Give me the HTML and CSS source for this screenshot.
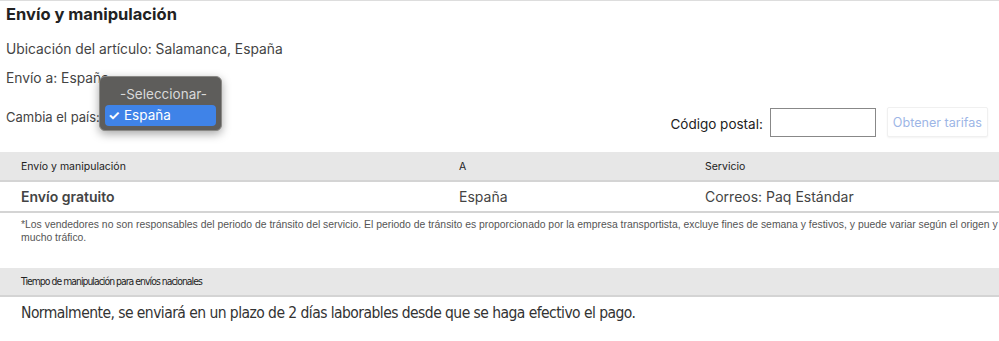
FILE: index.html
```html
<!DOCTYPE html>
<html lang="es">
<head>
    <meta charset="UTF-8">
    <meta name="viewport" content="width=device-width, initial-scale=1.0">
    <title>Envío y manipulación</title>
    <link rel="stylesheet" href="styles.css">
</head>
<body>
    <section class="shipping">
        <h2 class="shipping-title">Envío y manipulación</h2>

        <p class="info-line">Ubicación del artículo: Salamanca, España</p>
        <p class="info-line ship-to">Envío a: España</p>

        <div class="rates-row">
            <div class="country">
                <label for="country">Cambia el país:</label>
                <span class="country-select" id="country"></span>
                <div class="dropdown">
                    <div class="dropdown-item">-Seleccionar-</div>
                    <div class="dropdown-item selected"><span class="check">&#10003;</span>España</div>
                </div>
            </div>
            <div class="zip">
                <label for="zip">Código postal:</label>
                <input type="text" id="zip" name="zip">
                <button type="button" class="rates-btn" disabled>Obtener tarifas</button>
            </div>
        </div>

        <div class="ship-table">
            <div class="table-head">
                <div>Envío y manipulación</div>
                <div>A</div>
                <div>Servicio</div>
            </div>
            <div class="table-row">
                <div class="cost">Envío gratuito</div>
                <div>España</div>
                <div>Correos: Paq Estándar</div>
            </div>
        </div>

        <p class="note">*Los vendedores no son responsables del periodo de tránsito del servicio. El periodo de tránsito es proporcionado por la empresa transportista, excluye fines de semana y festivos, y puede variar según el origen y el destino, especialmente durante periodos de mucho tráfico.</p>

        <div class="handling">
            <div class="handling-head">Tiempo de manipulación para envíos nacionales</div>
            <div class="handling-body">Normalmente, se enviará en un plazo de 2 días laborables desde que se haga efectivo el pago.</div>
        </div>
    </section>
</body>
</html>
```

FILE: styles.css
```css
html {
    overflow: hidden;
}

body {
    margin: 0;
    padding: 0;
    font-family: 'Inter', 'Open Sans', sans-serif;
    color: #333;
    background: #fff;
}

.shipping {
    width: 1240px;
    border-top: 1px solid #ddd;
}

.shipping-title {
    margin: 0;
    padding: 2px 6px 0;
    font-size: 16.5px;
    font-weight: 700;
    color: #222;
    line-height: 22px;
}

.info-line {
    margin: 0;
    padding: 14px 6px 0;
    font-size: 13.8px;
    line-height: 20px;
    color: #444;
}

.info-line.ship-to {
    padding-top: 9px;
}

.rates-row {
    display: flex;
    align-items: flex-start;
    width: 982px;
    padding: 0 0 0 6px;
    margin-top: 19px;
}

.country {
    position: relative;
    display: flex;
    align-items: center;
    height: 20px;
    font-size: 13px;
    color: #444;
}

.country-select {
    display: inline-block;
    width: 100px;
    height: 20px;
}

.dropdown {
    position: absolute;
    left: 93px;
    top: -31px;
    width: 111px;
    padding: 7px 5px 4px;
    background: #5e5d5b;
    border: 1px solid #8a8986;
    border-radius: 6px;
    box-shadow: 0 3px 10px rgba(0, 0, 0, 0.35);
    font-size: 13.5px;
}

.dropdown-item {
    height: 21px;
    line-height: 21px;
    color: #d9d9d9;
    text-align: center;
    padding-left: 6px;
}

.dropdown-item.selected {
    background: #3f83e8;
    color: #fff;
    text-align: left;
    border-radius: 4px;
    padding-left: 3px;
}

.check {
    display: inline-block;
    width: 16px;
    font-weight: 700;
}

.zip {
    display: flex;
    align-items: center;
    margin-left: auto;
    font-size: 13.5px;
    color: #222;
}

.zip label {
    margin-right: 7px;
    padding-top: 4px;
}

.zip input {
    width: 104px;
    height: 27px;
    padding: 0;
    border: 1px solid #888;
    border-radius: 0;
    margin-right: 11px;
}

.rates-btn {
    height: 30px;
    padding: 0 5px;
    background: #fff;
    border: 1px solid #f0f0f0;
    border-radius: 2px;
    box-shadow: 0 1px 2px rgba(0, 0, 0, 0.05);
    font-family: 'Inter', sans-serif;
    font-size: 12.6px;
    color: #9db6e6;
}

.ship-table {
    margin-top: 15px;
}

.table-head,
.table-row {
    display: grid;
    grid-template-columns: 438px 246px 1fr;
    border-bottom: 2px solid #d4d4d4;
}

.table-head {
    background: #e7e7e7;
    height: 28px;
    align-items: center;
    font-size: 10.5px;
    color: #222;
}

.table-row {
    height: 29px;
    align-items: center;
    font-size: 14px;
    color: #444;
}

.table-head > div,
.table-row > div {
    padding-left: 21px;
}

.table-row .cost {
    font-weight: 600;
}

.note {
    margin: 0;
    padding: 5px 21px 0;
    font-family: 'Liberation Sans', Arial, sans-serif;
    font-size: 10.4px;
    line-height: 13px;
    color: #555;
}

.handling {
    margin-top: 24px;
}

.handling-head {
    height: 27px;
    line-height: 27px;
    padding-left: 21px;
    background: #e7e7e7;
    border-bottom: 2px solid #d4d4d4;
    font-family: 'DejaVu Sans Condensed', sans-serif;
    font-size: 10.3px;
    letter-spacing: -0.95px;
    color: #222;
}

.handling-body {
    padding: 6px 21px 0;
    font-family: 'DejaVu Sans Condensed', sans-serif;
    font-size: 15.5px;
    letter-spacing: -0.55px;
    line-height: 20px;
    color: #333;
}
```
